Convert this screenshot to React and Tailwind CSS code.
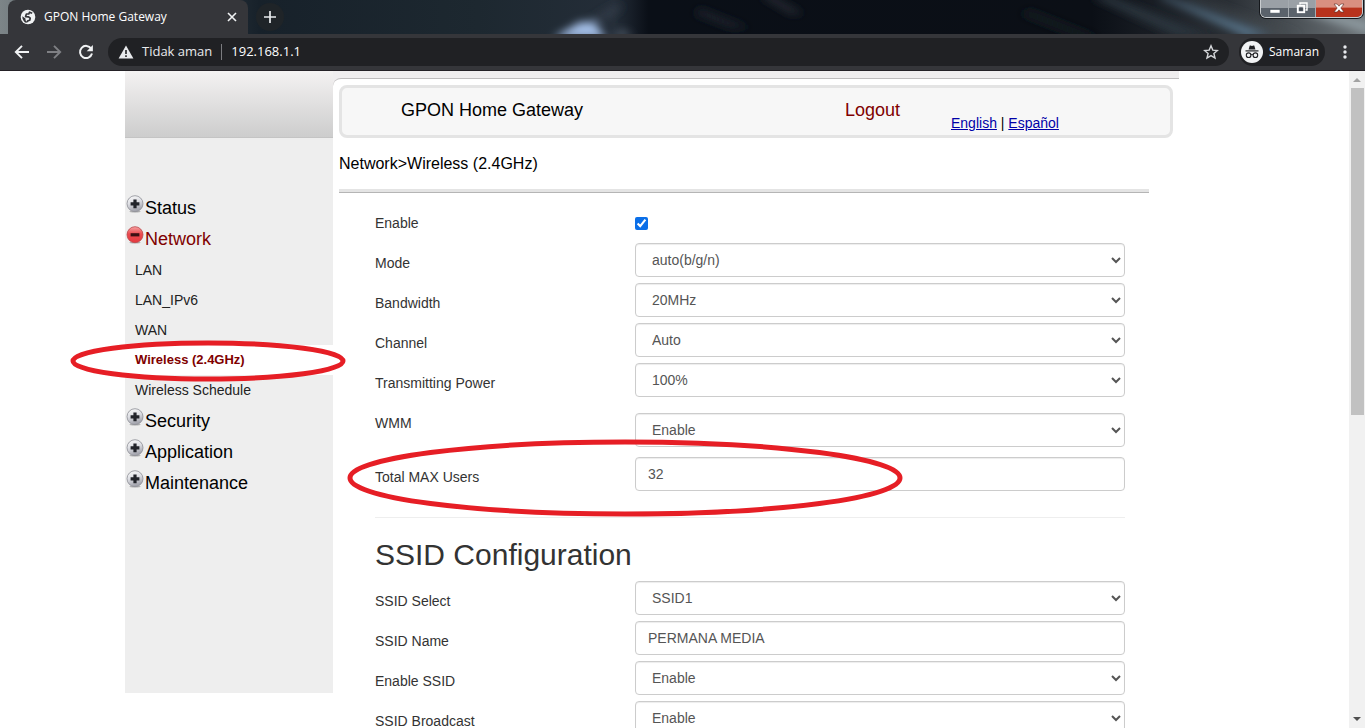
import { useState } from "react";

// Sidebar menu
const menu = [
  { title: "Status" },
  {
    title: "Network",
    open: true,
    items: ["LAN", "LAN_IPv6", "WAN", "Wireless (2.4GHz)", "Wireless Schedule"],
  },
  { title: "Security" },
  { title: "Application" },
  { title: "Maintenance" },
];

const radioFields = [
  { id: "mode", label: "Mode", options: ["auto(b/g/n)", "b", "g", "n"] },
  { id: "bandwidth", label: "Bandwidth", options: ["20MHz", "40MHz"] },
  { id: "channel", label: "Channel", options: ["Auto", "1", "6", "11"] },
  { id: "power", label: "Transmitting Power", options: ["100%", "80%", "60%"] },
];

const onOff = ["Enable", "Disable"];

const controlClass =
  "block h-[34px] w-full rounded border border-[#ccc] bg-white px-3 text-sm text-[#555] shadow-[inset_0_1px_1px_rgba(0,0,0,0.075)]";

function GlobeIcon() {
  return (
    <svg viewBox="0 0 16 16" className="h-4 w-4">
      <circle cx="8" cy="8" r="7.3" fill="#f1f3f4" />
      <path
        d="M12.2 4.2L9.6 3.2 8.8 5H6.4L5.6 7.6l3 .2 1.6 1.4-.4 2-2 .6-.6 1.4"
        fill="none"
        stroke="#35363a"
        strokeWidth="1.7"
        strokeLinejoin="round"
      />
      <path d="M2.3 7.2l3.2 2.2v1.8l1.4 1.6-.4 1.2C4 13.2 2.2 10.600 2.300 7.200z" fill="#35363a" />
    </svg>
  );
}

function IncognitoIcon() {
  return (
    <svg viewBox="0 0 22 22" className="h-[22px] w-[22px]">
      <circle cx="11" cy="11" r="11" fill="#f1f3f4" />
      <path d="M7.6 8.6l1-3.7c.1-.5.6-.6 1-.4l1.4.4 1.4-.4c.4-.2.9-.1 1 .4l1 3.7z" fill="#202124" />
      <path d="M4.5 9.9h13" stroke="#202124" strokeWidth="1.2" />
      <g fill="none" stroke="#202124" strokeWidth="1.1">
        <circle cx="7.6" cy="14.2" r="2.3" />
        <circle cx="14.4" cy="14.2" r="2.3" />
        <path d="M9.9 13.9c.7-.5 1.5-.5 2.2 0" />
      </g>
    </svg>
  );
}

function BallIcon({ open }) {
  return (
    <svg viewBox="0 0 18 18" className="h-[18px] w-[18px]">
      <defs>
        <linearGradient id="ballGray" x1="0" y1="0" x2="0.3" y2="1">
          <stop offset="0" stopColor="#fdfdfd" />
          <stop offset="0.5" stopColor="#dedfe4" />
          <stop offset="1" stopColor="#a3a4ad" />
        </linearGradient>
        <linearGradient id="ballRed" x1="0" y1="0" x2="0" y2="1">
          <stop offset="0" stopColor="#f6a3a3" />
          <stop offset="0.45" stopColor="#ea4a4f" />
          <stop offset="1" stopColor="#e5393f" />
        </linearGradient>
      </defs>
      <ellipse cx="9" cy="16.6" rx="5.500" ry="1" fill="#777" opacity="0.5" />
      <circle
        cx="9"
        cy="8.7"
        r="8"
        fill={open ? "url(#ballRed)" : "url(#ballGray)"}
        stroke={open ? "#b9474b" : "#8d8e96"}
        strokeWidth="0.8"
      />
      <path
        d={open ? "M4.6 7.2h8.8v3.2H4.6z" : "M7.4 4.4h3.2v2.8h2.8v3.2h-2.8v2.8H7.4v-2.8H4.6V7.2h2.8z"}
        fill={open ? "#3a1013" : "#22242a"}
      />
    </svg>
  );
}

// Desktop seen through the glass title bar
function Wallpaper() {
  return (
    <svg
      viewBox="0 0 1365 34"
      preserveAspectRatio="none"
      className="absolute inset-0 h-full w-full"
      aria-hidden="true"
    >
      <defs>
        <linearGradient id="sky">
          <stop offset="0" stopColor="#7d8588" />
          <stop offset="0.05" stopColor="#59636a" />
          <stop offset="0.19" stopColor="#17212a" />
          <stop offset="0.35" stopColor="#1d2830" />
          <stop offset="0.45" stopColor="#242d38" />
          <stop offset="0.475" stopColor="#0a0f17" />
          <stop offset="0.8" stopColor="#0b0f16" />
          <stop offset="0.9" stopColor="#2a2f35" />
          <stop offset="1" stopColor="#6d7478" />
        </linearGradient>
        <filter id="soft" x="-20%" y="-50%" width="140%" height="200%">
          <feGaussianBlur stdDeviation="4" />
        </filter>
      </defs>
      <rect width="1365" height="34" fill="url(#sky)" />
      <g filter="url(#soft)">
        <path d="M553 38L580 22h14l12 16z" fill="#a3bee6" />
        <path d="M590 20L612 6h12L608 20z" fill="#303a47" />
        <path d="M612 36l10-6 12 6z" fill="#5b6775" />
        <path d="M700 8l50 20h-20l-36-14z" fill="#1f242b" />
        <path d="M770 -6l34 20h-14l-30-18z" fill="#252b33" />
        <path d="M1030 10l70 28h-20l-60-24z" fill="#171d24" />
        <path d="M1110 -4l100 40h-34L1090 -4z" fill="#2c353e" />
        <path d="M1164 -4l106 40h-24L1158 -4z" fill="#5c7a92" />
        <path d="M1190 -4l110 40h-16L1184 -4z" fill="#454b50" />
        <path d="M1300 12l70 22v-12l-50-14z" fill="#8d999f" />
      </g>
    </svg>
  );
}

function WindowButtons() {
  return (
    <div className="absolute top-0 right-0.5 flex h-[18px] overflow-hidden rounded-b-md border border-t-0 border-[#c9cdd0] shadow-[0_0_0_1px_#15181c]">
      <button
        type="button"
        aria-label="Minimize"
        className="flex w-7 items-end justify-center border-r border-[#a5abb0] bg-linear-to-b from-[#9aa0a6] from-45% to-[#5a626b] to-50% pb-[3px]"
      >
        <svg viewBox="0 0 12 5" className="h-[5px] w-3">
          <rect x="1" y="0.500" width="10" height="3.6" fill="#fff" stroke="#4c5560" strokeWidth="0.6" />
        </svg>
      </button>
      <button
        type="button"
        aria-label="Restore"
        className="flex w-[27px] items-center justify-center border-r border-[#a5abb0] bg-linear-to-b from-[#9aa0a6] from-45% to-[#5a626b] to-50% pb-0.5"
      >
        <svg viewBox="0 0 12 12" className="h-3 w-3" fill="none" stroke="#fff">
          <path d="M4 2.5V1h7v7H9.5" strokeWidth="1.4" />
          <rect x="1.8" y="3.8" width="6.4" height="6.4" strokeWidth="1.9" />
          <rect x="4" y="6" width="2" height="2" stroke="#3a424c" strokeWidth="0.8" />
        </svg>
      </button>
      <button
        type="button"
        aria-label="Close"
        className="flex w-[46px] items-center justify-center bg-linear-to-b from-[#d98f80] from-40% to-[#b8321c] to-50% pb-0.5"
      >
        <svg viewBox="0 0 12 12" className="h-3 w-3">
          <path d="M1 2h3.2L6 4.2 7.8 2H11L7.8 6 11 10H7.8L6 7.8 4.2 10H1l3.2-4z" fill="#fff" stroke="#5c2a24" strokeWidth="0.6" />
        </svg>
      </button>
    </div>
  );
}

function BrowserChrome() {
  return (
    <div className="shrink-0 border-b border-[#242126] bg-[#35363a] font-['Open_Sans',sans-serif] text-white">
      {/* Tab strip */}
      <div className="relative flex h-[34px] bg-[#17212a]">
        <Wallpaper />
        <div className="relative ml-2 flex w-60 items-center rounded-t-lg bg-[#35363a] pr-2.5 pl-3">
          <GlobeIcon />
          <span className="ml-2 flex-1 text-xs">GPON Home Gateway</span>
          <button type="button" aria-label="Close tab">
            <svg viewBox="0 0 12 12" className="h-3 w-3" stroke="#f1f3f4" strokeWidth="1.6">
              <path d="M2 2l8 8M10 2l-8 8" />
            </svg>
          </button>
        </div>
        <button
          type="button"
          aria-label="New tab"
          className="relative mt-[3px] ml-2 flex h-7 w-7 items-center justify-center rounded-full bg-[#1f2428]"
        >
          <svg viewBox="0 0 12 12" className="h-3 w-3" stroke="#e8eaed" strokeWidth="1.7">
            <path d="M6 0v12M0 6h12" />
          </svg>
        </button>
        <WindowButtons />
      </div>

      {/* Toolbar */}
      <div className="flex h-9 items-center pr-3">
        <button type="button" aria-label="Back" className="ml-[14px]">
          <svg viewBox="0 0 16 16" className="h-4 w-4" fill="none" stroke="#f1f3f4" strokeWidth="1.9">
            <path d="M15 8H2M8 1.8L1.8 8 8 14.2" />
          </svg>
        </button>
        <button type="button" aria-label="Forward" className="ml-4">
          <svg viewBox="0 0 16 16" className="h-4 w-4" fill="none" stroke="#7f8084" strokeWidth="1.9">
            <path d="M1 8h13M8 1.8L14.2 8 8 14.2" />
          </svg>
        </button>
        <button type="button" aria-label="Reload" className="ml-4">
          <svg viewBox="0 0 16 16" className="h-4 w-4">
            <path d="M13.2 4.6A6.1 6.1 0 1 0 14 9.6" fill="none" stroke="#f1f3f4" strokeWidth="2" />
            <path d="M14.9 1v6.2H8.7z" fill="#f1f3f4" />
          </svg>
        </button>
        <div className="ml-[14px] flex h-7 flex-1 items-center rounded-full bg-[#202124] pr-2.5 pl-2.5 text-[13px]">
          <svg viewBox="0 0 16 16" className="h-4 w-4">
            <path d="M8 1.5L15.4 14.5H.6z" fill="#e8eaed" />
            <path d="M8 6v4M8 11.2v1.8" stroke="#202124" strokeWidth="1.6" />
          </svg>
          <span className="ml-2 text-[#e8eaed]">Tidak aman</span>
          <span className="mx-[9px] h-4 w-px bg-[#7b7c80]" />
          <span className="flex-1">192.168.1.1</span>
          <button type="button" aria-label="Bookmark">
            <svg viewBox="0 0 16 16" className="h-4 w-4" fill="none" stroke="#d5d7da" strokeWidth="1.4">
              <path d="M8 1.8l1.8 4.3 4.6.4-3.5 3 1.1 4.6L8 11.6l-4 2.5 1.1-4.6-3.5-3 4.6-.4z" />
            </svg>
          </button>
        </div>
        <div className="ml-2.5 flex h-7 items-center rounded-full bg-[#202124] pr-1.5 pl-0.5 text-xs">
          <IncognitoIcon />
          <span className="ml-1.5">Samaran</span>
        </div>
        <button type="button" aria-label="Menu" className="ml-3">
          <svg viewBox="0 0 16 16" className="h-4 w-4" fill="#e8eaed">
            <circle cx="8" cy="3" r="1.7" />
            <circle cx="8" cy="8" r="1.7" />
            <circle cx="8" cy="13" r="1.7" />
          </svg>
        </button>
      </div>
    </div>
  );
}

function Sidebar({ current, onSelect }) {
  return (
    <aside className="h-[622px] w-52 shrink-0 bg-[#eee]">
      <div className="h-[67px] border-b border-[#c4c4c4] bg-linear-to-b from-[#f4f2f2] to-[#cdcdcd]" />
      <nav className="pt-[54px] text-black">
        {menu.map(({ title, open, items }) => (
          <div key={title}>
            <a
              href="#"
              className={`flex h-[31px] items-center pl-px text-lg ${open ? "text-[#800000]" : ""}`}
            >
              <span className="pb-[7px]">
                <BallIcon open={open} />
              </span>
              <span className="ml-px">{title}</span>
            </a>
            {items && (
              <ul className="pt-px">
                {items.map((item) => (
                  <li key={item} className={item === current ? "relative bg-white" : ""}>
                    <a
                      href="#"
                      onClick={() => onSelect(item)}
                      className={`flex h-[30px] items-center pl-2.5 ${
                        item === current ? "text-[13px] font-bold text-[#800000]" : "text-sm text-[#222]"
                      }`}
                    >
                      {item}
                    </a>
                    {item === current && (
                      <svg
                        viewBox="0 0 276 42"
                        className="pointer-events-none absolute -top-[5px] -left-[55px] z-10 h-[42px] w-[276px]"
                      >
                        <ellipse cx="138" cy="21" rx="135" ry="18" fill="none" stroke="#e61e25" strokeWidth="5" />
                      </svg>
                    )}
                  </li>
                ))}
              </ul>
            )}
          </div>
        ))}
      </nav>
    </aside>
  );
}

function Row({ id, label, children, className = "h-10" }) {
  return (
    <div className={`grid grid-cols-[260px_1fr] items-start ${className}`}>
      <label htmlFor={id} className="pt-2.5 text-sm">
        {label}
      </label>
      {children}
    </div>
  );
}

function Select({ id, options }) {
  return (
    <select id={id} className={controlClass}>
      {options.map((option) => (
        <option key={option}>{option}</option>
      ))}
    </select>
  );
}

function WirelessForm() {
  return (
    <form className="mt-2.5 mr-[54px] ml-9 text-[#333]">
      <Row id="enable" label="Enable">
        <input id="enable" type="checkbox" defaultChecked className="mt-3.5 h-[13px] w-[13px] accent-[#0b6fe8]" />
      </Row>
      {radioFields.map(({ id, label, options }) => (
        <Row key={id} id={id} label={label}>
          <Select id={id} options={options} />
        </Row>
      ))}
      <Row id="wmm" label="WMM" className="h-[54px]">
        <div className="pt-2.5">
          <Select id="wmm" options={onOff} />
        </div>
      </Row>
      <Row id="users" label="Total MAX Users" className="relative h-[60px]">
        <input id="users" type="text" defaultValue="32" className={controlClass} />
        <svg
          viewBox="0 0 556 78"
          className="pointer-events-none absolute -top-[18px] -left-7 z-10 h-[78px] w-[556px]"
        >
          <ellipse cx="278" cy="39" rx="275" ry="36" fill="none" stroke="#e61e25" strokeWidth="5" />
        </svg>
      </Row>

      <hr className="border-[#eee]" />
      <h2 className="mt-5 mb-2.5 text-[30px] leading-[33px]">SSID Configuration</h2>

      <Row id="ssid" label="SSID Select">
        <Select id="ssid" options={["SSID1", "SSID2", "SSID3", "SSID4"]} />
      </Row>
      <Row id="ssidName" label="SSID Name">
        <input id="ssidName" type="text" defaultValue="PERMANA MEDIA" className={controlClass} />
      </Row>
      <Row id="enableSsid" label="Enable SSID">
        <Select id="enableSsid" options={onOff} />
      </Row>
      <Row id="broadcast" label="SSID Broadcast">
        <Select id="broadcast" options={onOff} />
      </Row>
    </form>
  );
}

function Scrollbar() {
  return (
    <div className="flex w-4 shrink-0 flex-col items-center bg-[#f1f1f1]">
      <svg viewBox="0 0 16 17" className="h-[17px] w-4" fill="#a3a3a3">
        <path d="M4 11l4-4 4 4z" />
      </svg>
      <div className="h-[327px] w-[13px] bg-[#c1c1c1]" />
      <svg viewBox="0 0 16 17" className="mt-auto h-[17px] w-4" fill="#505050">
        <path d="M4 6l4 4 4-4z" />
      </svg>
    </div>
  );
}

export default function App() {
  const [current, setCurrent] = useState("Wireless (2.4GHz)");

  return (
    <div className="flex h-screen flex-col overflow-hidden bg-white font-['Liberation_Sans',Arial,sans-serif]">
      <BrowserChrome />
      <div className="flex min-h-0 flex-1">
        <div className="min-w-0 flex-1 overflow-hidden">
          <div className="ml-[125px] flex max-w-[1054px] items-start">
            <Sidebar current={current} onSelect={setCurrent} />
            <main className="min-w-0 flex-1 bg-[#f0eeef] pt-[7px]">
              <div className="rounded-tl-lg border-t border-[#bfbdbe] bg-white pt-1.5 pl-1.5">
                {/* Banner */}
                <header className="mr-1.5 flex h-[53px] items-start rounded-lg border-[3px] border-[#e4e4e4] bg-[#f7f7f7] pl-[59px] text-black">
                  <h1 className="mt-2 w-[444px] text-lg">GPON Home Gateway</h1>
                  <a href="#" className="mt-2 w-[106px] text-lg text-[#800000]">
                    Logout
                  </a>
                  <div className="mt-[25px] text-sm">
                    <a href="#" className="text-[#0000a8] underline">English</a> |{" "}
                    <a href="#" className="text-[#0000a8] underline">Español</a>
                  </div>
                </header>
                <div className="mt-[14px] mr-[30px] h-[41px] border-b border-[#b5b5b5] text-base text-black shadow-[inset_0_-3px_#e4e4e4]">
                  Network&gt;Wireless (2.4GHz)
                </div>
                <WirelessForm />
              </div>
            </main>
          </div>
        </div>
        <Scrollbar />
      </div>
    </div>
  );
}
